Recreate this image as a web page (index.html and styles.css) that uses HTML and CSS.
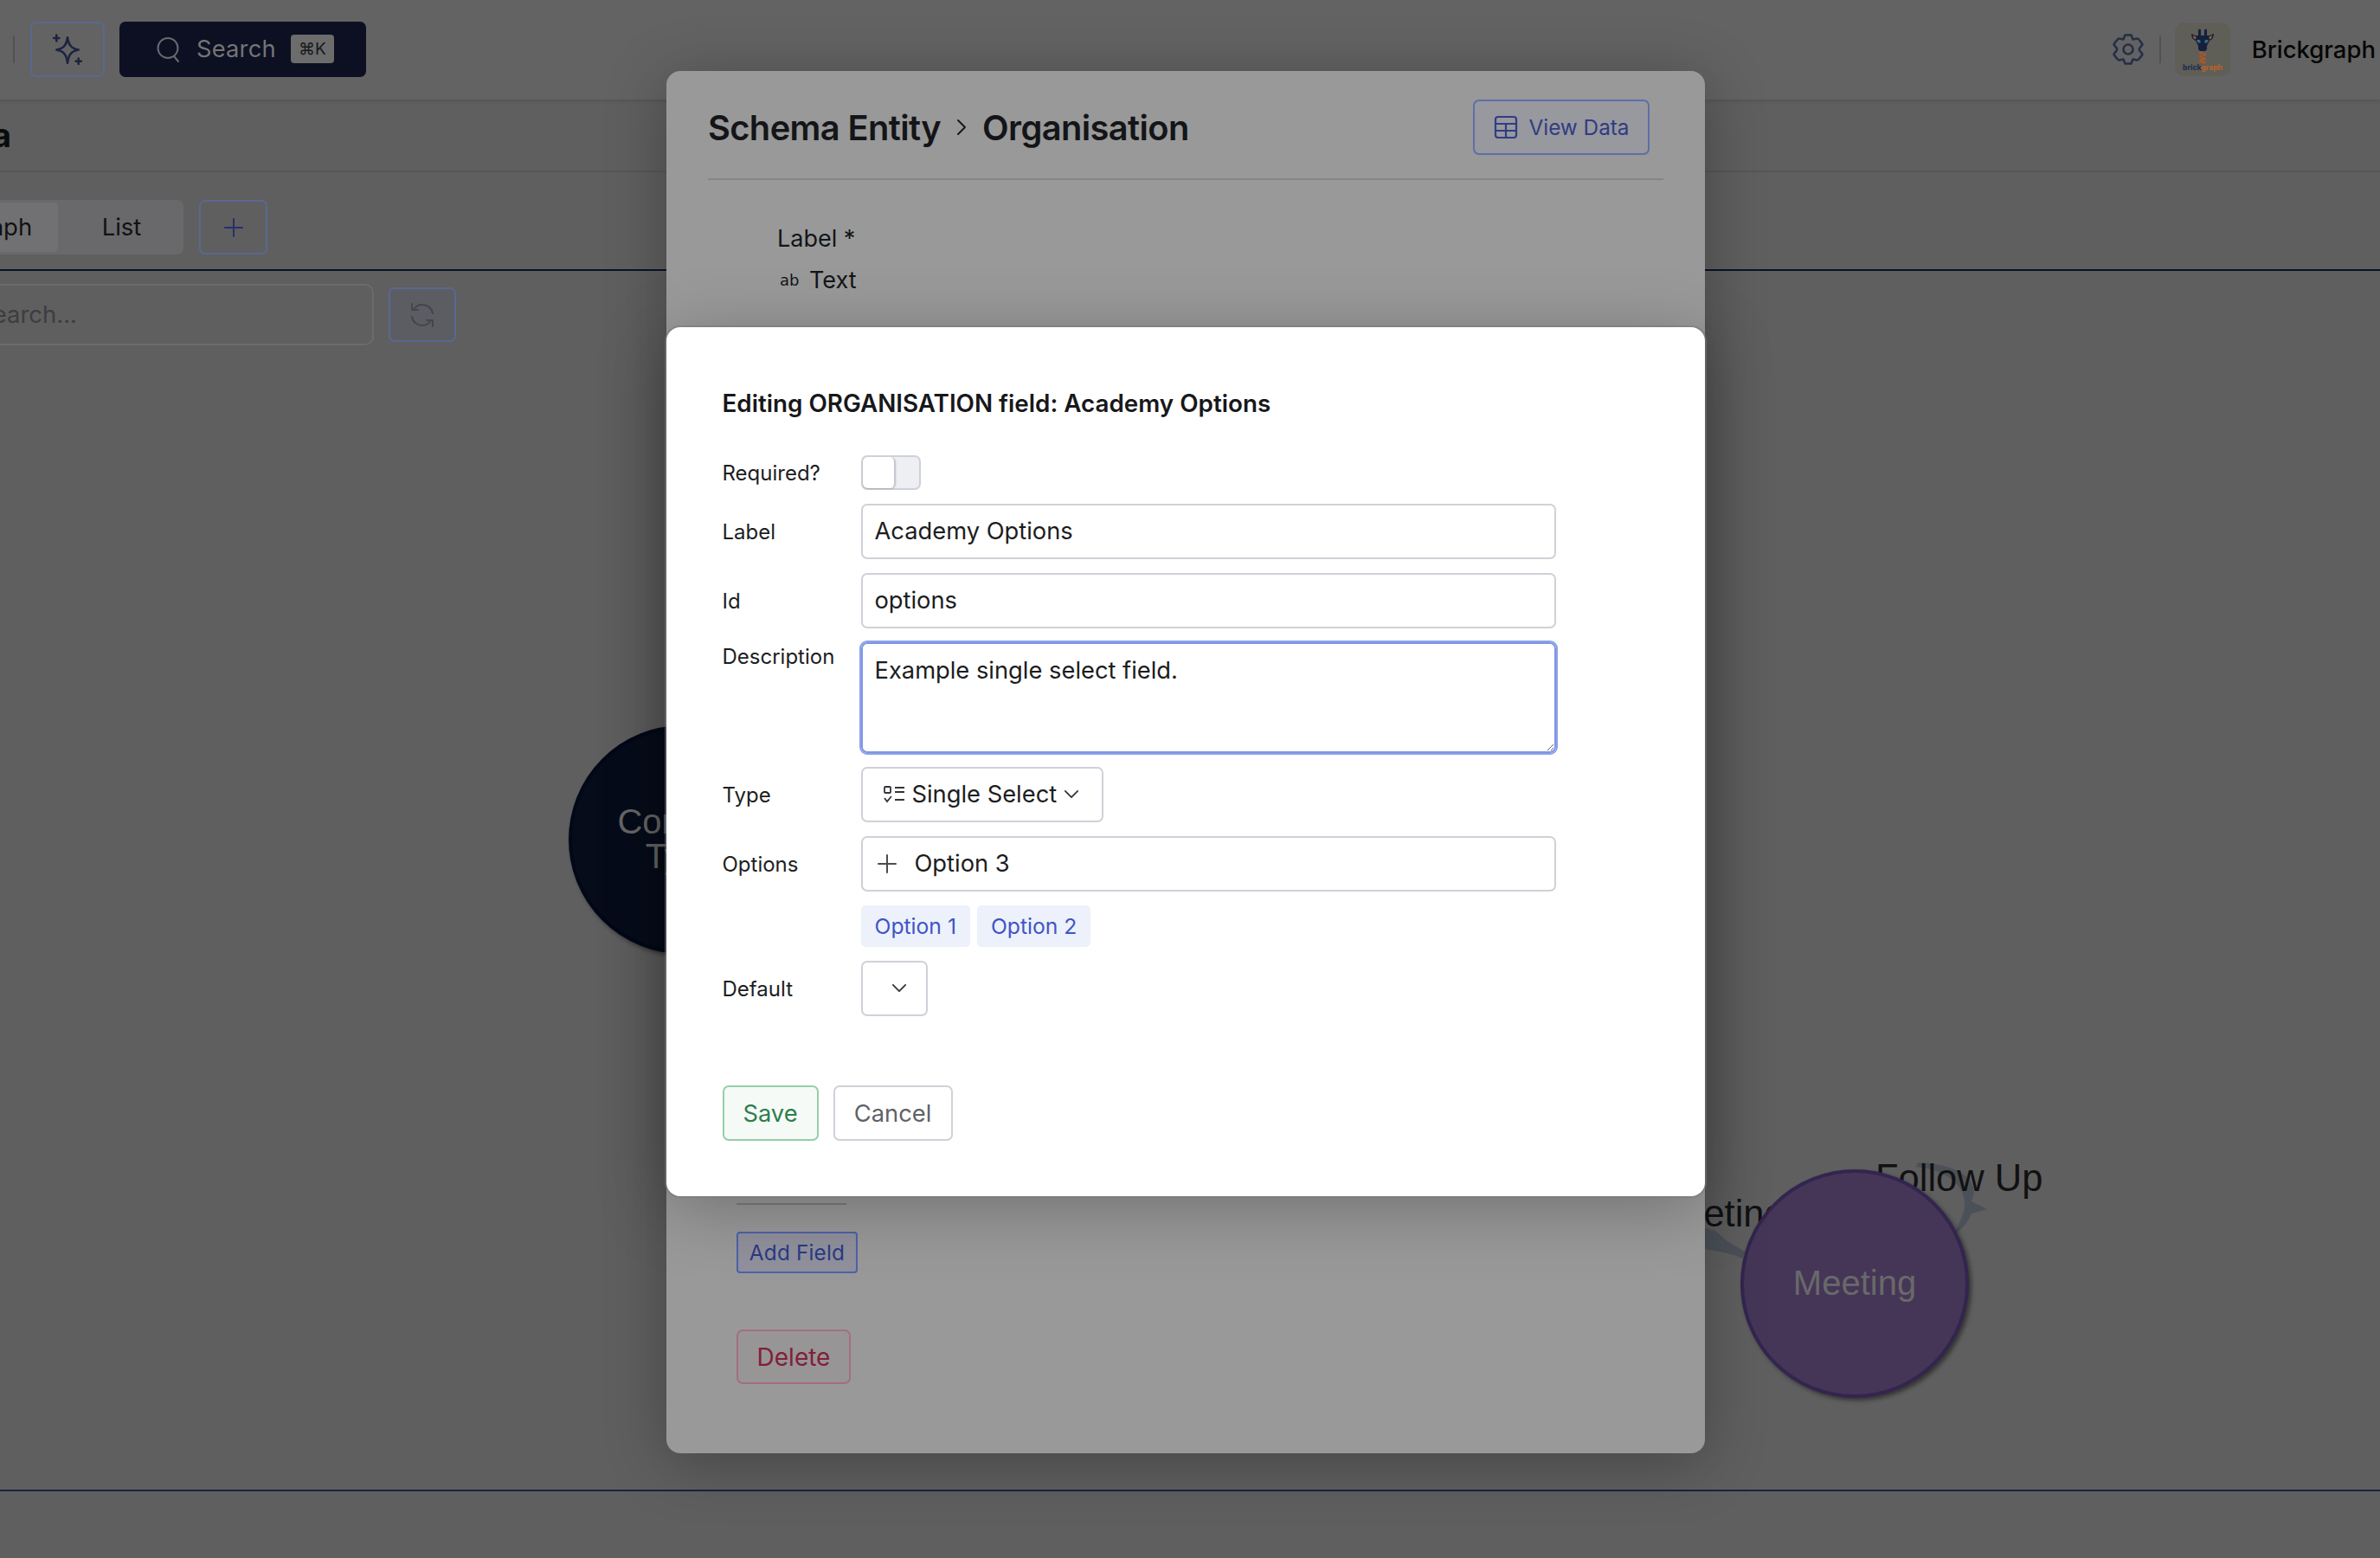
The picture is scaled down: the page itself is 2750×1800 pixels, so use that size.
FILE: index.html
```html
<!DOCTYPE html>
<html>
<head>
<meta charset="UTF-8">
<title>Schema Entity - Organisation</title>
<link rel="stylesheet" href="styles.css">
</head>
<body>
<div class="app">
  <!-- top bar -->
  <div class="topbar">
    <div class="top-left">
      <span class="vline"></span>
      <button class="ghost-btn spark-btn">
        <svg width="36" height="36" viewBox="0 0 34 34" fill="none" stroke="#1d2340" stroke-width="2.400" stroke-linejoin="round" stroke-linecap="round"><path d="M17 4C18 12 21 16 29 17.500C21 19 18 23 17 32C16 23 13 19 5 17.500C13 16 16 12 17 4Z"/><path d="M5 1.500V8M2 4.700H8M29 27V33M26 30H32"/></svg>
      </button>
      <button class="search-btn">
        <svg width="28" height="30" viewBox="0 0 28 30" fill="none" stroke="#6a6a6e" stroke-width="2" stroke-linecap="round"><circle cx="13" cy="13.500" r="11.500"/><path d="M20 23L25 29"/></svg>
        <span>Search</span>
        <span class="kbd">⌘K</span>
      </button>
    </div>
    <div class="top-right">
      <svg width="36" height="38" viewBox="0 0 36 38" fill="none" stroke="#252f46" stroke-width="2.600" stroke-linejoin="round"><circle cx="18" cy="19" r="5.500"/><path d="M14.500 2.500H21.500L23.500 7.500L28.500 6.500C30 6.500 34 12 34.500 13.500L31 18V20L34.500 24.500C34 26 30 31.500 28.500 31.500L23.500 30.500L21.500 35.500H14.500L12.500 30.500L7.500 31.500C6 31.500 2 26 1.500 24.500L5 20V18L1.500 13.500C2 12 6 6.500 7.500 6.500L12.500 7.500Z"/></svg>
      <span class="vline"></span>
      <div class="logo">
        <svg width="64" height="62" viewBox="0 0 64 62">
          <path d="M27 9a1.500 1.500 0 0 1 3 0v6h-3zM34 9a1.500 1.500 0 0 1 3 0v6h-3z" fill="#13203f"/>
          <path d="M19 13l7 3-1 5c-3 0-6-3-6-8zM45 13l-7 3 1 5c3 0 6-3 6-8z" fill="#13203f"/>
          <path d="M21 15l4 2-1 2.500c-1.500-.5-3-2-3-4.500zM43 15l-4 2 1 2.500c1.500-.5 3-2 3-4.500z" fill="#a8602f"/>
          <path d="M25 15h14l1 6-3 6v4l-2 2h-6l-2-2v-4l-3-6z" fill="#13203f"/>
          <path d="M25 20h4l1 3-3 1zM39 20h-4l-1 3 3 1z" fill="#3f6a72"/>
          <g fill="#a8582a">
            <ellipse cx="30" cy="35" rx="2.500" ry="1.500"/>
            <ellipse cx="34" cy="37" rx="2" ry="2"/>
            <ellipse cx="30" cy="39" rx="2" ry="1.500"/>
            <ellipse cx="33" cy="42" rx="3" ry="2"/>
            <ellipse cx="30" cy="44" rx="2" ry="2"/>
            <ellipse cx="33" cy="46" rx="3" ry="1.500"/>
          </g>
          <text class="logo-text" x="32" y="54.500" text-anchor="middle"><tspan fill="#24304f">brick</tspan><tspan fill="#b5622c">graph</tspan></text>
        </svg>
      </div>
      <span class="org-name">Brickgraph</span>
    </div>
  </div>

  <div class="subbar"><h1>Schema</h1></div>

  <!-- tabs -->
  <div class="tabrow">
    <div class="tabs">
      <div class="tab active">Graph</div>
      <div class="tab">List</div>
    </div>
    <button class="ghost-btn plus-btn">
      <svg width="22" height="22" viewBox="0 0 22 22" stroke="#25306e" stroke-width="2" stroke-linecap="round"><path d="M11 1V21M1 11H21"/></svg>
    </button>
  </div>

  <div class="searchrow">
    <div class="graph-search">Search...</div>
    <button class="ghost-btn refresh-btn">
      <svg width="30" height="30" viewBox="0 0 30 30" fill="none" stroke="#43464c" stroke-width="2" stroke-linecap="round" stroke-linejoin="round"><path d="M27 13C26 7 21 3 15 3C11 3 7.500 5 5.500 8M3 2V9H10"/><path d="M3 17C4 23 9 27 15 27C19 27 22.500 25 24.500 22M27 28V21H20"/></svg>
    </button>
  </div>

  <!-- graph canvas -->
  <div class="canvas">
    <svg class="edges" width="2880" height="1321" viewBox="0 0 2880 1321">
      <g transform="translate(130 -400)" fill="#4c5159">
        <path d="M2258 1426C2264 1412 2270 1402 2270 1392C2270 1370 2252 1352 2214 1348L2216 1343C2262 1345 2280 1360 2281 1378L2278 1388L2296 1397L2278 1402C2274 1412 2266 1422 2258 1426Z"/>
        <path d="M2016 1446L2014 1454C2000 1448 1985 1445 1966 1443L1966 1418L1982 1422L1996 1434Z"/>
      </g>
    </svg>
    <div class="edge-label label-follow">Follow Up</div>
    <div class="edge-label label-meeting">Meeting</div>
    <div class="node node-contract">Contract<br>Type</div>
    <div class="node node-meeting">Meeting</div>
  </div>

  <div class="footer"></div>
</div>

<!-- entity modal behind -->
<div class="modal entity-modal">
  <div class="entity-head">
    <div class="crumbs">
      <span>Schema Entity</span>
      <svg width="14" height="22" viewBox="0 0 14 22" fill="none" stroke="#17181b" stroke-width="2" stroke-linecap="round" stroke-linejoin="round"><path d="M3 3L11 11L3 19"/></svg>
      <span>Organisation</span>
    </div>
    <button class="ghost-btn view-btn">
      <svg width="28" height="28" viewBox="0 0 28 28" fill="none" stroke="#2f3d82" stroke-width="2.200"><rect x="2" y="2" width="24" height="24" rx="3"/><path d="M2 10H26M2 18H26M14 10V26"/></svg>
      View Data
    </button>
  </div>
  <div class="entity-field">
    <div>Label *</div>
    <div class="field-type"><span class="ab">ab</span>Text</div>
  </div>
  <div class="covered-line"></div>
  <button class="ghost-btn add-btn">Add Field</button>
  <button class="delete-btn">Delete</button>
</div>

<!-- field editor modal -->
<div class="modal field-modal">
  <h2>Editing ORGANISATION field: Academy Options</h2>
  <div class="form">
    <label>Required?</label>
    <div class="toggle"><span class="knob"></span></div>

    <label>Label</label>
    <div class="input">Academy Options</div>

    <label>Id</label>
    <div class="input">options</div>

    <label class="top">Description</label>
    <textarea class="desc">Example single select field.</textarea>

    <label>Type</label>
    <div class="select type-select">
      <svg width="26" height="22" viewBox="0 0 26 22" fill="none" stroke="#33353a" stroke-width="1.800"><rect x="2" y="2" width="7" height="7" rx="1"/><path d="M14 3H25M14 8H25M14 17H25M2 15L5 19L10 13"/></svg>
      Single Select
      <svg class="chev" width="18" height="11" viewBox="0 0 20 12" fill="none" stroke="#33353a" stroke-width="2" stroke-linecap="round" stroke-linejoin="round"><path d="M2 2L10 10L18 2"/></svg>
    </div>

    <label>Options</label>
    <div class="input option-input">
      <svg width="24" height="24" viewBox="0 0 24 24" stroke="#4a4c52" stroke-width="2" stroke-linecap="round"><path d="M12 2V22M2 12H22"/></svg>
      Option 3
    </div>

    <span></span>
    <div class="tags">
      <span class="tag">Option 1</span>
      <span class="tag">Option 2</span>
    </div>

    <label>Default</label>
    <div class="select default-select">
      <svg class="chev" width="18" height="11" viewBox="0 0 20 12" fill="none" stroke="#33353a" stroke-width="2" stroke-linecap="round" stroke-linejoin="round"><path d="M2 2L10 10L18 2"/></svg>
    </div>
  </div>
  <div class="actions">
    <button class="save-btn">Save</button>
    <button class="cancel-btn">Cancel</button>
  </div>
</div>
</body>
</html>
```

FILE: styles.css
```css
* {
	box-sizing: border-box;
}
html, body {
	margin: 0;
	height: 1800px;
	overflow: hidden;
	background: #5f5f5f;
	font-family: Inter, "Liberation Sans", sans-serif;
}
button {
	font-family: inherit;
	cursor: pointer;
}
/*the page behind is scrolled sideways, so it starts left of the window*/
.app {
	display: flex;
	flex-direction: column;
	width: 2880px;
	height: 1800px;
	margin-left: -130px;
}
.topbar {
	display: flex;
	align-items: center;
	justify-content: space-between;
	height: 115px;
	padding: 0 5px 2px 145px;
	background: #636363;
	box-shadow: 0 2px 4px rgba(0,0,0,0.12);
	position: relative;
}
.top-left, .top-right {
	display: flex;
	align-items: center;
}
.vline {
	width: 2px;
	height: 32px;
	background: #525252;
}
.ghost-btn {
	display: flex;
	align-items: center;
	justify-content: center;
	border: 2px solid #5a6890;
	border-radius: 7px;
	background: transparent;
	padding: 0;
}
.spark-btn {
	width: 86px;
	height: 64px;
	margin-left: 18px;
}
.search-btn {
	display: flex;
	align-items: center;
	width: 285px;
	height: 64px;
	margin-left: 17px;
	padding: 0 0 0 43px;
	border: 0;
	border-radius: 7px;
	background: #0c1022;
	color: #747476;
	font-size: 27.300px;
	letter-spacing: 0.2px;
}
.search-btn span:first-of-type {
	margin-left: 18px;
}
.kbd {
	width: 50px;
	height: 33px;
	margin-left: 17px;
	border-radius: 4px;
	background: #6c6c6c;
	color: #17181c;
	font-size: 19px;
	line-height: 33px;
	text-align: center;
	letter-spacing: 0;
}
.top-right .vline {
	margin: 0 16px 0 18px;
}
.logo {
	width: 64px;
	height: 62px;
	border-radius: 11px;
	background: #5f5e57;
}
.logo svg {
	display: block;
}
.logo-text {
	font-size: 8.500px;
	font-weight: 800;
}
.org-name {
	margin-left: 25px;
	color: #060606;
	font-size: 27.500px;
	font-weight: 500;
	letter-spacing: 0;
}
.subbar {
	display: flex;
	justify-content: flex-end;
	width: 143px;
	height: 82px;
	padding-top: 3px;
	white-space: nowrap;
}
.subbar h1 {
	margin: 0;
	color: #0b0b0c;
	font-size: 38px;
	font-weight: 700;
	line-height: 76px;
}
.tabrow {
	display: flex;
	align-items: center;
	gap: 18px;
	height: 116px;
	padding: 33px 0 18px 55px;
	border-top: 2px solid #575757;
	border-bottom: 2px solid #0a1428;
}
.tabs {
	display: flex;
	width: 287px;
	height: 63px;
	padding: 3px;
	border-radius: 7px;
	background: #69696b;
}
.tab {
	flex: 1;
	color: #111113;
	font-size: 27.500px;
	line-height: 57px;
	text-align: center;
	padding-left: 5px;
}
.tab.active {
	flex: 0 0 139px;
	padding-left: 0;
	border-radius: 5px;
	background: #717173;
}
.plus-btn {
	width: 79px;
	height: 63px;
}
.searchrow {
	display: flex;
	align-items: center;
	gap: 17px;
	height: 87px;
	padding: 15px 0 1px 94px;
}
.graph-search {
	width: 468px;
	height: 71px;
	padding-left: 8px;
	border: 2px solid #6b6b6b;
	border-radius: 10px;
	color: #3d3d3f;
	font-size: 27.500px;
	line-height: 67px;
}
.refresh-btn {
	width: 78px;
	height: 63px;
	background: #5c5d62;
}
.canvas {
	position: relative;
	flex: 1;
	background: #5f5f5f;
}
.edges {
	position: absolute;
	left: 0;
	top: 0;
}
.edge-label {
	position: absolute;
	color: #111113;
	font-family: "Liberation Sans", sans-serif;
	font-size: 43.500px;
	line-height: 43px;
	white-space: nowrap;
}
.label-follow {
	left: 2297px;
	top: 940px;
}
.label-meeting {
	left: 2038px;
	top: 981px;
}
/*graph nodes: the place on the canvas is the content*/
.node {
	position: absolute;
	display: flex;
	align-items: center;
	justify-content: center;
	width: 264px;
	height: 264px;
	padding-bottom: 3px;
	border-radius: 50%;
	color: #696969;
	font-family: "Liberation Sans", sans-serif;
	font-size: 40px;
	line-height: 40px;
	text-align: center;
	box-shadow: 3px 3px 5px rgba(0,0,0,0.45);
}
.node-contract {
	left: 787px;
	top: 438px;
	background: #060c1a;
	border: 4px solid #030818;
}
.node-meeting {
	left: 2141px;
	top: 951px;
	background: #453658;
	border: 4px solid #33254f;
}
.footer {
	height: 79px;
	border-top: 2px solid #1c2140;
	background: #5f5f5f;
}
.modal {
	position: absolute;
	left: 770px;
	width: 1200px;
	border-radius: 16px;
}
.entity-modal {
	top: 82px;
	height: 1597px;
	padding: 33px 48px 0;
	background: #999999;
	box-shadow: 0 10px 70px rgba(0,0,0,0.28);
}
.entity-head {
	display: flex;
	align-items: center;
	justify-content: space-between;
	height: 93px;
	padding: 0 16px 27px 0;
	border-bottom: 2px solid #85858b;
}
.crumbs {
	display: flex;
	align-items: center;
	gap: 17px;
	color: #141518;
	font-size: 39.800px;
	font-weight: 600;
	letter-spacing: -0.6px;
}
.view-btn {
	gap: 13px;
	width: 204px;
	height: 64px;
	color: #2f3d82;
	font-size: 24.300px;
	letter-spacing: 0;
	background: #98989f;
	border-color: #5f6ea8;
}
.entity-field {
	margin: 44px 0 0 80px;
	color: #141518;
	font-size: 27px;
	line-height: 48px;
}
.field-type {
	display: flex;
	align-items: center;
}
.ab {
	width: 37px;
	padding-left: 3px;
	font-size: 18px;
	font-family: "DejaVu Sans", sans-serif;
}
.covered-line {
	width: 127px;
	height: 2px;
	margin: 1042px 0 0 33px;
	background: #7c7c80;
}
.add-btn {
	width: 140px;
	height: 48px;
	margin: 31px 0 0 33px;
	border-color: #4e62aa;
	border-radius: 4px;
	background: #90919c;
	color: #2b3a85;
	font-size: 24.300px;
	letter-spacing: 0.2px;
}
.delete-btn {
	display: block;
	width: 132px;
	height: 63px;
	margin: 65px 0 0 33px;
	border: 2px solid #a36f7d;
	border-radius: 7px;
	background: #989596;
	color: #80203a;
	font-size: 28px;
	padding: 0;
}
.field-modal {
	top: 378px;
	height: 1004px;
	padding: 70px 65px 0 64.500px;
	background: #ffffff;
	box-shadow: 0 0 0 2px rgba(120,120,130,0.55), 0 14px 80px rgba(0,0,0,0.26);
}
.field-modal h2 {
	margin: 0;
	color: #17181b;
	font-size: 27.800px;
	font-weight: 600;
	line-height: 36px;
}
.form {
	display: grid;
	grid-template-columns: 160px 803px;
	row-gap: 16px;
	align-items: center;
	justify-items: start;
	margin-top: 42px;
}
.form label {
	color: #1d1e22;
	font-size: 24px;
}
.form label.top {
	align-self: start;
	padding-top: 2px;
}
.toggle {
	width: 69px;
	height: 40px;
	border: 2px solid #d0d1d8;
	border-radius: 7px;
	background: #eeeff3;
}
.knob {
	display: block;
	width: 38px;
	height: 36px;
	border-right: 2px solid #c8c9d0;
	border-radius: 6px;
	background: #ffffff;
	box-shadow: 0 1px 2px rgba(0,0,0,0.2);
}
.input, .select {
	display: flex;
	align-items: center;
	height: 64px;
	padding-bottom: 1px;
	border: 2px solid #d0d1d8;
	border-radius: 7px;
	background: #ffffff;
	color: #1c1d20;
	font-size: 27.300px;
}
.input {
	width: 803px;
	padding-left: 14px;
}
.desc {
	display: block;
	width: 803px;
	height: 128px;
	padding: 13px 14px;
	border: 2px solid #7f95e6;
	outline: 2px solid #8ea2e8;
	border-radius: 7px;
	color: #1c1d20;
	font-family: inherit;
	font-size: 27.300px;
	line-height: 36px;
}
.type-select {
	gap: 8px;
	width: 280px;
	padding-left: 23px;
}
.chev {
	flex: none;
}
.default-select {
	width: 77px;
	padding-left: 33px;
}
.option-input {
	gap: 20px;
	padding-left: 16px;
}
.tags {
	display: flex;
	gap: 8px;
}
.tag {
	height: 48px;
	padding: 0 16px;
	border-radius: 5px;
	background: #edf1fc;
	color: #3f55c4;
	font-size: 24.700px;
	line-height: 48px;
}
.actions {
	display: flex;
	gap: 17px;
	margin-top: 80px;
}
.save-btn, .cancel-btn {
	height: 64px;
	padding: 0;
	border-radius: 7px;
	font-size: 27.300px;
}
.save-btn {
	width: 111px;
	border: 2px solid #96cfa8;
	background: #f5faf6;
	color: #2e7d4f;
}
.cancel-btn {
	width: 138px;
	border: 2px solid #d0d1d8;
	background: #ffffff;
	color: #5f6269;
}
```
